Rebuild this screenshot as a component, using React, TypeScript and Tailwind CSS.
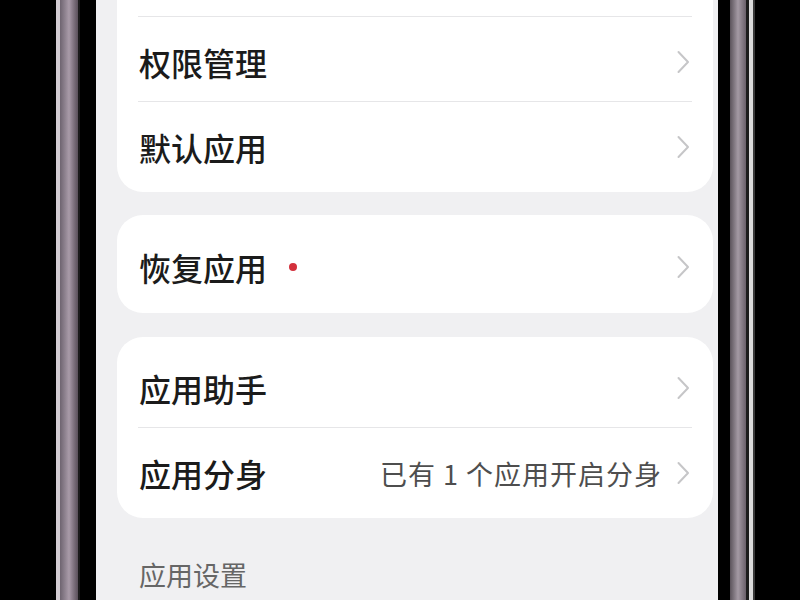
import React from 'react';

const font = { fontFamily: '"Noto Sans CJK SC", "Noto Sans", sans-serif' };

function Chevron() {
  return (
    <svg width="14" height="24" viewBox="0 0 14 24" fill="none" className="shrink-0">
      <path d="M2.5 2 L12 12 L2.5 22" stroke="#c6c6c8" strokeWidth="2" strokeLinecap="round" strokeLinejoin="round" />
    </svg>
  );
}

type Row = { label: string; value?: string; dot?: boolean };

function SettingRow({ label, value, dot }: Row) {
  // the row above the visible part of the list is cut by the top edge: keep only its height
  if (!label) return <div className="h-[84px]" />;
  return (
    <div className="flex h-[84px] items-center pl-[22px] pr-[23px] pt-[6px]">
      <span className="text-[32px] font-medium leading-none text-[#1b1b1b]">{label}</span>
      {dot && <span className="ml-[22px] h-[8px] w-[8px] rounded-full bg-[#d3303c]" />}
      <div className="flex-1" />
      {value && <span className="mr-[14px] text-[27px] leading-none tracking-[1px] text-[#4e4e4e]">{value}</span>}
      <Chevron />
    </div>
  );
}

function Card({ rows, className = '' }: { rows: Row[]; className?: string }) {
  return (
    <div className={`rounded-[26px] bg-white ${className}`}>
      {rows.map((r, i) => (
        <div key={i}>
          {i > 0 && <div className="mx-[21px] h-px bg-[#e6e6e8]" />}
          <SettingRow {...r} />
        </div>
      ))}
    </div>
  );
}

export default function App() {
  return (
    <div className="flex h-[600px] w-[800px] overflow-hidden bg-black" style={font}>
      <div className="w-[56px] shrink-0 bg-black" />
      {/* left edge of the phone frame */}
      <div className="flex w-[24px] shrink-0">
        <div className="w-[4px] bg-[#d2ccd2]" />
        <div className="w-[18px] bg-gradient-to-r from-[#6e6470] via-[#a99ba9] to-[#5a505a]" />
        <div className="w-[2px] bg-[#1a1a1a]" />
      </div>
      <div className="w-[16px] shrink-0 bg-black" />

      {/* screen */}
      <div className="flex w-[622px] shrink-0 flex-col bg-[#f0f0f2] pl-[21px] pr-[5px]">
        <Card className="mt-[-74px] py-[6px]" rows={[{ label: '' }, { label: '权限管理' }, { label: '默认应用' }]} />
        <Card className="mt-[23px] py-[7px]" rows={[{ label: '恢复应用', dot: true }]} />
        <Card className="mt-[24px] py-[6px]" rows={[{ label: '应用助手' }, { label: '应用分身', value: '已有 1 个应用开启分身' }]} />
        <div className="mt-[38px] pl-[22px] text-[27px] leading-[38px] text-[#666666]">应用设置</div>
      </div>

      <div className="w-[12px] shrink-0 bg-black" />
      {/* right edge of the phone frame */}
      <div className="flex w-[25px] shrink-0">
        <div className="w-[16px] bg-gradient-to-r from-[#5c545c] via-[#a49aa4] to-[#6a606a]" />
        <div className="w-[3px] bg-[#1c1c1c]" />
        <div className="w-[4px] bg-[#dcdcdc]" />
        <div className="w-[2px] bg-[#3a3a3a]" />
      </div>
      <div className="flex-1 bg-black" />
    </div>
  );
}
